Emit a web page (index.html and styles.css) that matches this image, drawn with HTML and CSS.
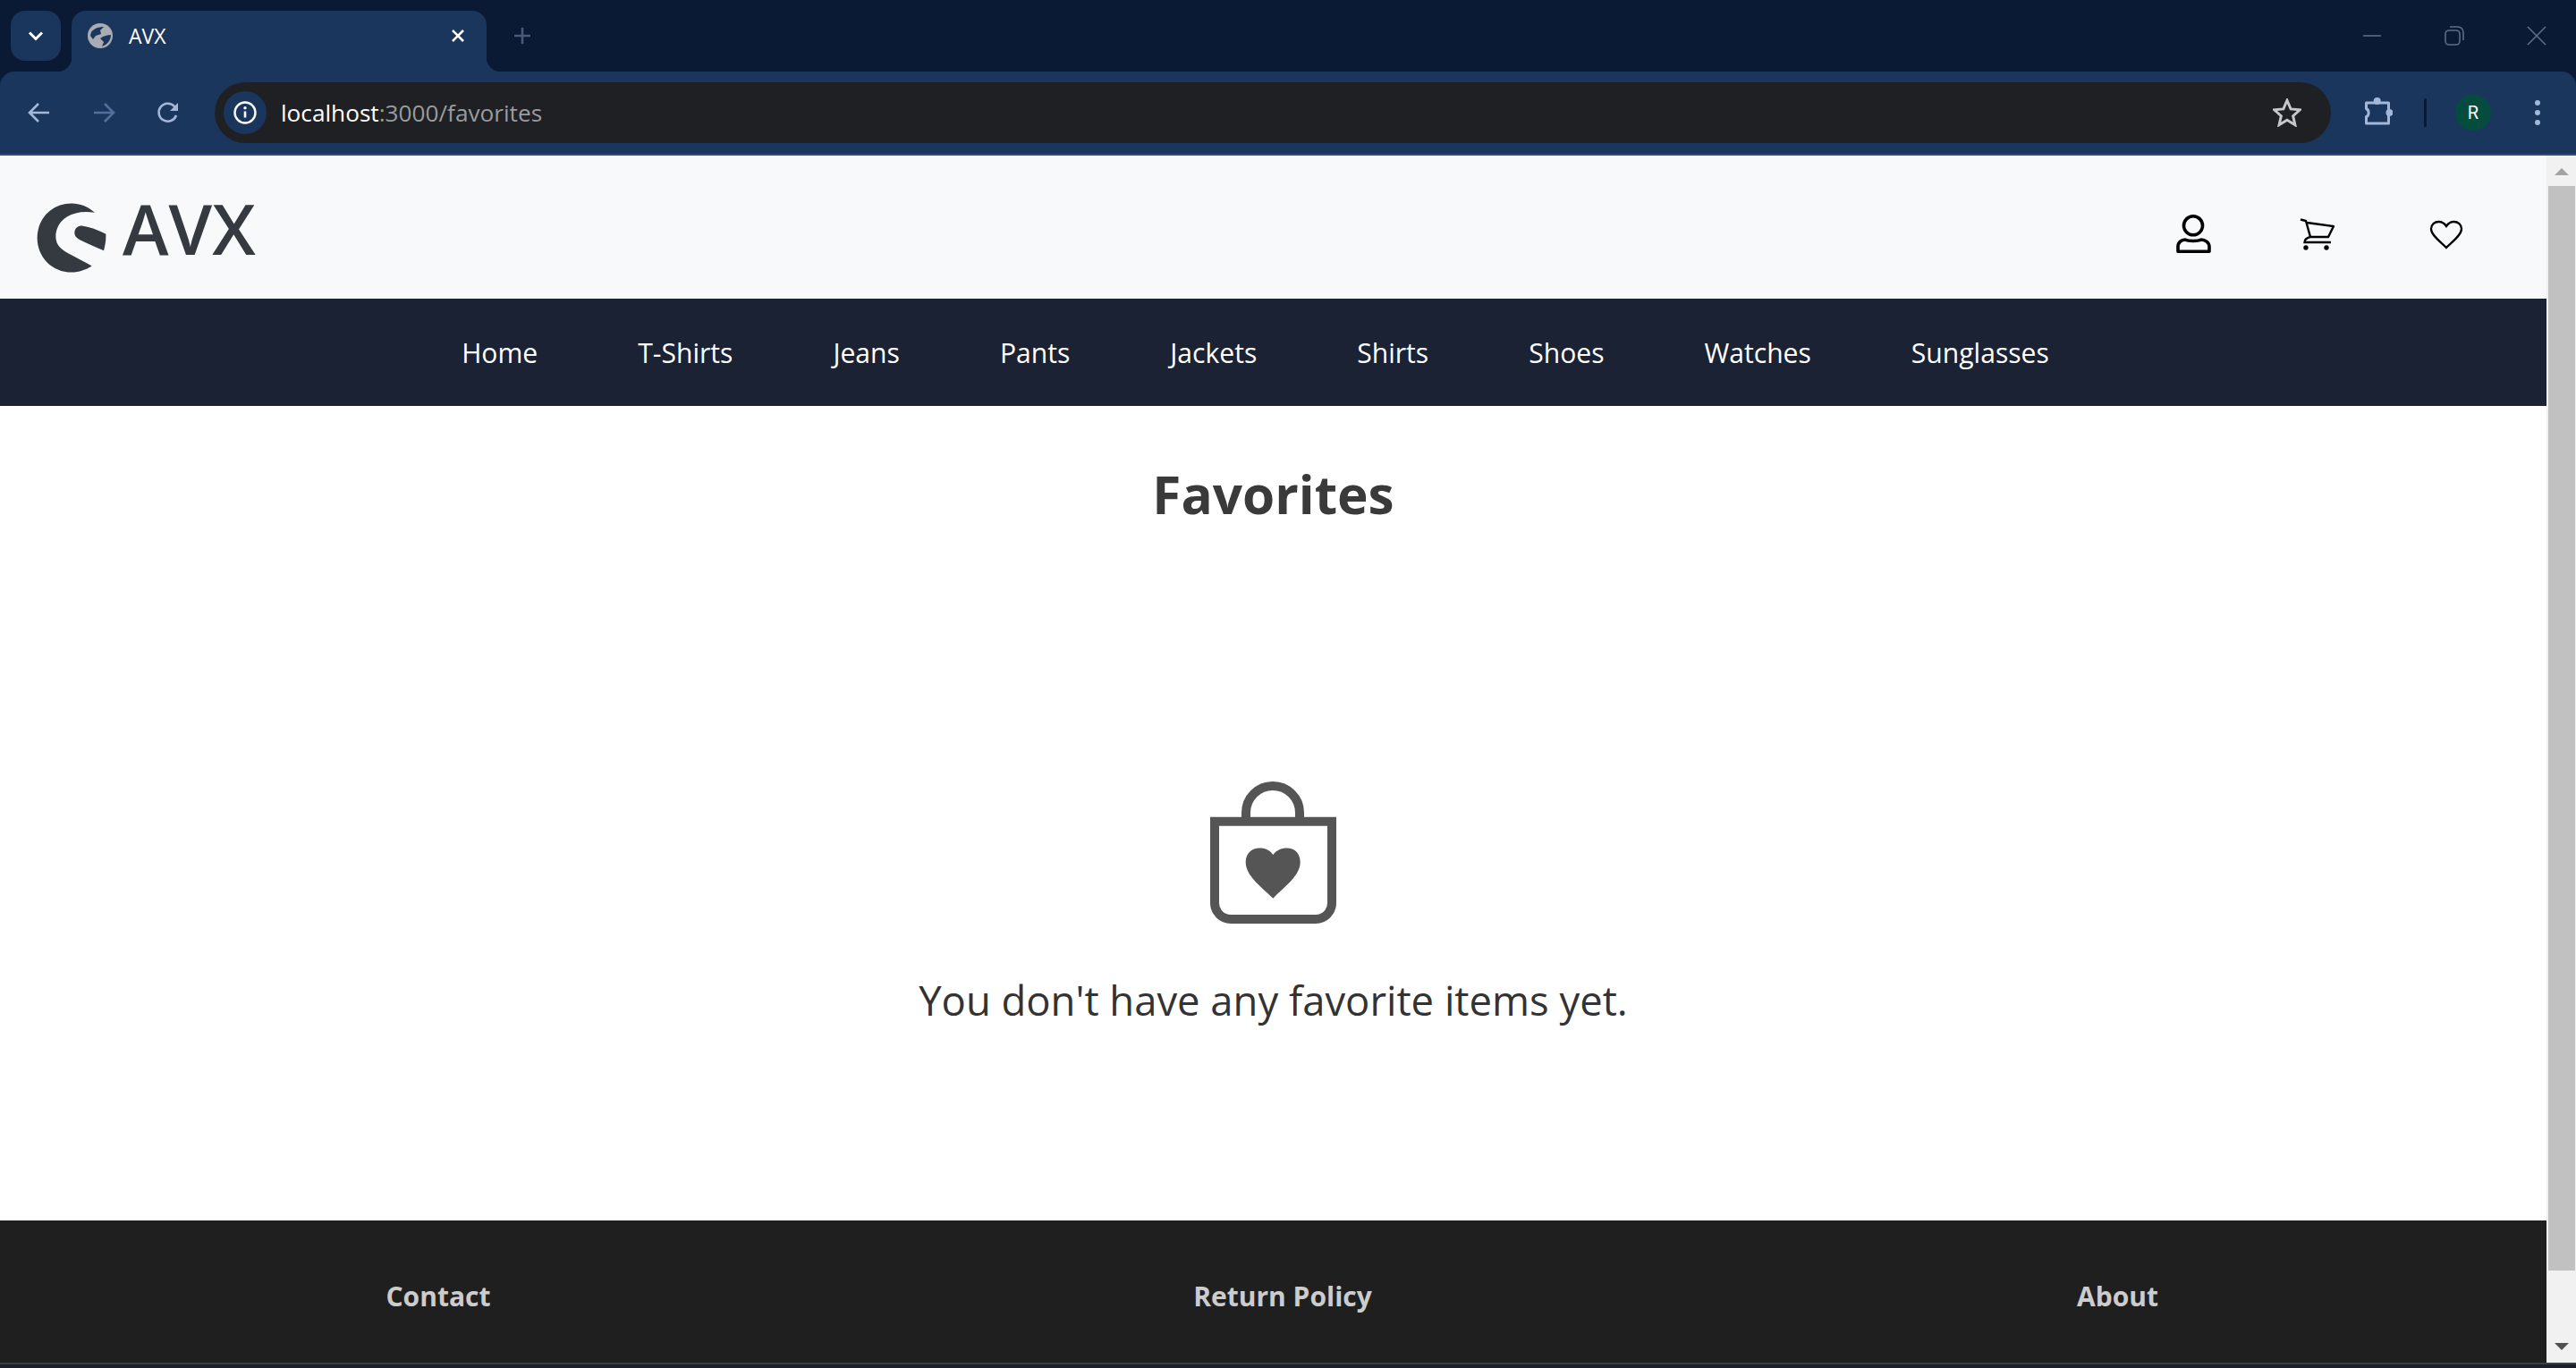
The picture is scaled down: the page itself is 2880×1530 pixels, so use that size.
FILE: index.html
```html
<!DOCTYPE html>
<html lang="en">
<head>
<meta charset="UTF-8">
<title>AVX</title>
<link rel="stylesheet" href="styles.css">
</head>
<body>

<div class="tabstrip">
    <button class="tabmenu">
        <svg width="24" height="24" viewBox="0 0 24 24"><path d="M5 8.5l7 7 7-7" fill="none" stroke="#fff" stroke-width="3"/></svg>
    </button>
    <div class="tab">
        <svg class="favicon" width="28" height="28" viewBox="0 0 28 28">
            <circle cx="14" cy="14" r="14" fill="#a9adb3"/>
            <path d="M4 10C7 6 12 4 18 4L14 8L15 12L9 14L6 18L3 14Z" fill="#1b365d"/>
            <path d="M14 17C18 14 22 13 26 13C26 19 22 24 16 26L18 21Z" fill="#1b365d"/>
        </svg>
        <span class="tabtitle">AVX</span>
        <svg class="tabclose" width="20" height="20" viewBox="0 0 20 20"><path d="M4 4l12 12M16 4L4 16" stroke="#fff" stroke-width="2.6"/></svg>
    </div>
    <svg class="newtab" width="24" height="24" viewBox="0 0 24 24"><path d="M12 3v18M3 12h18" stroke="#4a5a78" stroke-width="2.6"/></svg>
    <div class="winbtns">
        <span class="winbtn"><svg width="24" height="24" viewBox="0 0 24 24"><path d="M2 12h20" stroke="#5f6d85" stroke-width="1.6"/></svg></span>
        <span class="winbtn"><svg width="24" height="24" viewBox="0 0 24 24"><rect x="2" y="6" width="16" height="16" rx="4" fill="none" stroke="#5f6d85" stroke-width="1.6"/><path d="M7 2h9a6 6 0 0 1 6 6v9" fill="none" stroke="#5f6d85" stroke-width="1.6"/></svg></span>
        <span class="winbtn"><svg width="24" height="24" viewBox="0 0 24 24"><path d="M2 2l20 20M22 2L2 22" stroke="#5f6d85" stroke-width="1.6"/></svg></span>
    </div>
</div>

<div class="toolbar">
    <button class="toolbtn">
        <svg width="28" height="28" viewBox="0 0 28 28"><path d="M25 14H4M13 4L3 14l10 10" fill="none" stroke="#a3b7d8" stroke-width="2.6"/></svg>
    </button>
    <button class="toolbtn">
        <svg width="28" height="28" viewBox="0 0 28 28"><path d="M3 14h21M15 4l10 10-10 10" fill="none" stroke="#54709a" stroke-width="2.6"/></svg>
    </button>
    <button class="toolbtn">
        <svg width="28" height="28" viewBox="0 0 28 28"><path d="M23 17a10 10 0 1 1-2-10l3 3" fill="none" stroke="#a3b7d8" stroke-width="2.6"/><path d="M25 3v9h-9z" fill="#a3b7d8"/></svg>
    </button>
    <div class="addressbar">
        <span class="siteinfo">
            <svg width="28" height="28" viewBox="0 0 28 28"><circle cx="14" cy="14" r="11.5" fill="none" stroke="#fff" stroke-width="2.4"/><path d="M14 12.5v7" stroke="#fff" stroke-width="2.6"/><circle cx="14" cy="8.8" r="1.7" fill="#fff"/></svg>
        </span>
        <span class="url"><b>localhost</b>:3000/favorites</span>
        <svg class="star" width="32" height="32" viewBox="2 2 28 28"><path d="M16 4l3.6 8.4 9 .8-6.800 6 2 8.800L16 23.300 8.200 28l2-8.800-6.800-6 9-.8z" fill="none" stroke="#c4c7cc" stroke-width="2.600"/></svg>
    </div>
    <button class="toolbtn puzzle">
        <svg width="34" height="36" viewBox="0 0 34 36">
            <path d="M4.500 7H29.500V30H4.500V22.500C8 21.500 8 15 4.500 13.500Z" fill="none" stroke="#a3b7d8" stroke-width="3" stroke-linejoin="round"/>
            <circle cx="16.700" cy="5" r="4" fill="#a3b7d8"/>
            <circle cx="30.500" cy="18" r="4" fill="#a3b7d8"/>
        </svg>
    </button>
    <span class="tooldiv"></span>
    <span class="avatar">R</span>
    <button class="toolbtn dots">
        <svg width="8" height="32" viewBox="0 0 8 32"><circle cx="4" cy="5" r="3" fill="#a3b7d8"/><circle cx="4" cy="16" r="3" fill="#a3b7d8"/><circle cx="4" cy="27" r="3" fill="#a3b7d8"/></svg>
    </button>
</div>

<div class="viewport">
    <div class="page">
        <header class="siteheader">
            <a class="logo">
                <svg class="logomark" width="80" height="82" viewBox="120 105 240 245">
                    <path d="M318 143C295 122 268 112 240 112C175 112 125 162 125 228C125 292 175 343 240 343C265 343 288 335 308 322C285 308 262 298 240 285C208 268 187 255 187 222C187 170 240 130 318 143Z" fill="#343a40"/>
                    <path d="M250 208C252 194 262 186 275 187C305 192 332 202 355 215C356 235 353 252 348 270C320 258 292 246 268 234C257 228 249 220 250 208Z" fill="#343a40"/>
                </svg>
                <span class="logotext">AVX</span>
            </a>
            <div class="headericons">
                <svg class="icon-user" width="39" height="44" viewBox="0 0 39 44">
                    <circle cx="19" cy="12.300" r="10.500" fill="none" stroke="#000" stroke-width="3.600"/>
                    <path d="M2 41.200V36C2 31 6 28 10 28C14 30 24 30 28 28C32 28 37 31 37 36V41.200Z" fill="none" stroke="#000" stroke-width="3.600" stroke-linejoin="round"/>
                </svg>
                <svg class="icon-cart" width="39" height="36" viewBox="0 0 39 36">
                    <path d="M1 1.500L7 3L12 21C8 22 5.500 24 5.500 27H35M8 5L38 9L32 21H12" fill="none" stroke="#000" stroke-width="2.400"/>
                    <circle cx="7" cy="33" r="2.700"/><circle cx="30" cy="33" r="2.700"/>
                </svg>
                <svg class="icon-heart" width="38" height="33" viewBox="0 0 38 33">
                    <path d="M19 31C12 24 2 17 2 10C2 5 6 2 10.500 2C14 2 17 4 19 7C21 4 24 2 27.500 2C32 2 36 5 36 10C36 17 26 24 19 31Z" fill="none" stroke="#000" stroke-width="2.300"/>
                </svg>
            </div>
        </header>

        <nav class="mainnav">
            <a>Home</a>
            <a>T-Shirts</a>
            <a>Jeans</a>
            <a>Pants</a>
            <a>Jackets</a>
            <a>Shirts</a>
            <a>Shoes</a>
            <a>Watches</a>
            <a>Sunglasses</a>
        </nav>

        <main class="favorites">
            <h1>Favorites</h1>
            <svg class="emptyicon" width="141" height="160" viewBox="0 0 141 160">
                <path d="M40 44V35a30 30 0 0 1 60 0V44" fill="none" stroke="#555" stroke-width="10"/>
                <path d="M5 44.700H136V136a18 18 0 0 1-18 18H23a18 18 0 0 1-18-18Z" fill="none" stroke="#555" stroke-width="10"/>
                <path d="M70.300 130.700C55 116 39.700 105 39.700 90C39.700 80 47 74.400 55 74.400C62 74.400 67 77 70.300 82C74 77 79 74.400 86 74.400C94 74.400 100.700 80 100.700 90C100.700 105 85 116 70.300 130.700Z" fill="#555"/>
            </svg>
            <p class="emptytext">You don't have any favorite items yet.</p>
        </main>

        <footer class="sitefooter">
            <h3>Contact</h3>
            <h3>Return Policy</h3>
            <h3>About</h3>
        </footer>
    </div>

    <div class="scrollbar">
        <span class="arrow up"></span>
        <span class="thumb"></span>
        <span class="arrow down"></span>
    </div>
</div>

<div class="bottomstrip"></div>

</body>
</html>
```

FILE: styles.css
```css
* { box-sizing: border-box; }
html, body { margin: 0; height: 1530px; overflow: hidden; }
body { background: #0a1a35; font-family: "Open Sans", "Noto Sans", sans-serif; }
button { background: none; border: none; padding: 0; display: flex; align-items: center; justify-content: center; }
svg { display: block; flex: none; }

/* browser chrome */
.tabstrip { height: 80px; background: #0a1a35; display: flex; padding: 12px 0 0 12px; }
.tabmenu { width: 56px; height: 56px; background: #1b365d; border-radius: 16px; }
.tab { position: relative; width: 464px; height: 68px; margin-left: 12px; background: #1b365d; border-radius: 16px 16px 0 0; display: flex; align-items: center; padding: 0 22px 12px 18px; }
.tab::before, .tab::after { content: ""; position: absolute; bottom: 0; width: 16px; height: 16px; }
.tab::before { left: -16px; background: radial-gradient(circle at 0 0, transparent 16px, #1b365d 16.500px); }
.tab::after { right: -16px; background: radial-gradient(circle at 100% 0, transparent 16px, #1b365d 16.500px); }
.tabtitle { color: #fff; font-size: 23px; margin-left: 18px; flex: 1; }
.newtab { margin: 16px 0 0 28px; }
.winbtns { display: flex; height: 56px; margin: -12px -2px 0 auto; }
.winbtn { width: 92px; height: 80px; display: flex; align-items: center; justify-content: center; }

.toolbar { height: 94px; background: #1b365d; border-bottom: 2px solid #34507a; border-radius: 16px 16px 0 0; display: flex; align-items: center; padding: 0 23px 0 24px; }
.toolbtn { width: 40px; height: 40px; margin-right: 32px; }
.addressbar { flex: 1; height: 68px; background: #1f2023; border-radius: 34px; display: flex; align-items: center; padding: 0 32px 0 10px; }
.siteinfo { width: 48px; height: 48px; border-radius: 50%; background: #1b365d; display: flex; align-items: center; justify-content: center; }
.url { flex: 1; margin-left: 16px; font-size: 26.200px; color: #9a9b9e; }
.url b { font-weight: 400; color: #fff; }
.star { margin-right: 1px; }
.puzzle { margin: 0 32px; }
.tooldiv { width: 3px; height: 32px; background: #0a1a35; border-radius: 2px; margin-right: 32px; }
.avatar { width: 40px; height: 40px; border-radius: 50%; background: #044d3e; color: #fff; font: 20px "Roboto", sans-serif; display: flex; align-items: center; justify-content: center; margin-right: 32px; }
.dots { margin: 0; }

/* page */
.viewport { height: 1350px; display: flex; background: #fff; }
.page { flex: 1; min-width: 0; }

.siteheader { height: 160px; background: #f8f9fa; display: flex; align-items: center; justify-content: space-between; padding: 24px 93px 0 40px; }
.logo { display: flex; align-items: center; gap: 17px; }
.logotext { font-size: 78px; line-height: 80px; font-weight: 600; color: #343a40; margin-bottom: 22px; }
.headericons { display: flex; align-items: center; gap: 99px; margin-bottom: 8px; }
.icon-cart { margin-right: 7px; }

.mainnav { height: 120px; background: #1b2233; display: flex; align-items: center; justify-content: center; gap: 112px; padding: 1px 40px 0 0; }
.mainnav a { color: #fff; font-size: 30.100px; }

.favorites { height: 911px; background: #fff; display: flex; flex-direction: column; align-items: center; padding-top: 58px; }
.favorites h1 { margin: 0 0 282px; font-size: 58.500px; line-height: 80px; font-weight: 700; color: #3a3a3a; }
.emptytext { margin: 52px 0 0; font-size: 45.400px; line-height: 64px; color: #333; }

.sitefooter { height: 159px; background: #201f20; display: grid; grid-template-columns: 980px 908px 1fr; padding-top: 65px; }
.sitefooter h3 { margin: 0; text-align: center; font-size: 30px; line-height: 40px; font-weight: 700; color: #ccc; }

/* scrollbar */
.scrollbar { width: 33px; background: #f1f1f1; display: flex; flex-direction: column; align-items: center; position: relative; }
.thumb { position: absolute; left: 2px; right: 1px; top: 34px; height: 1213px; background: #c1c1c1; }
.arrow { position: absolute; width: 0; height: 0; border-left: 8px solid transparent; border-right: 8px solid transparent; }
.arrow.up { top: 14px; border-bottom: 8px solid #a3a3a3; }
.arrow.down { bottom: 14px; border-top: 8px solid #505050; }

.bottomstrip { height: 6px; background: #1c2128; border-top: 2px solid #3a3f44; }
```
